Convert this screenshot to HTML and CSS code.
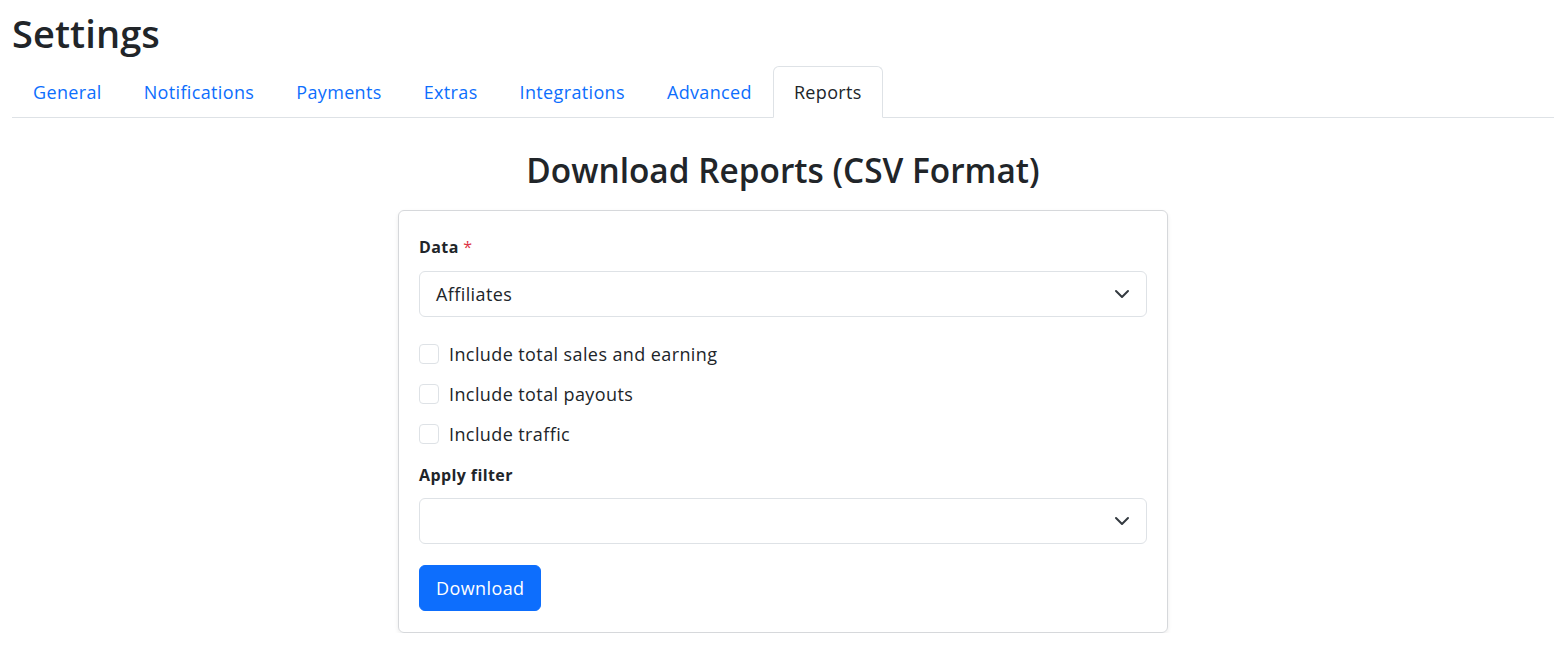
FILE: index.html
```html
<!DOCTYPE html>
<html lang="en">
<head>
<meta charset="utf-8">
<title>Settings</title>
<link rel="stylesheet" href="styles.css">
</head>
<body>
<div class="container">
  <h1 class="page-title">Settings</h1>
  <ul class="tabs">
    <li><a class="tab" href="#">General</a></li>
    <li><a class="tab" href="#">Notifications</a></li>
    <li><a class="tab" href="#">Payments</a></li>
    <li><a class="tab" href="#">Extras</a></li>
    <li><a class="tab" href="#">Integrations</a></li>
    <li><a class="tab" href="#">Advanced</a></li>
    <li><a class="tab active" href="#">Reports</a></li>
  </ul>
  <h2 class="section-title">Download Reports (CSV Format)</h2>
  <div class="card">
    <label class="field-label">Data <span class="req">*</span></label>
    <div class="select">
      <span class="select-value">Affiliates</span>
      <svg class="chevron" viewBox="0 0 16 16" width="16" height="16"><path d="M2 5l6 6 6-6" fill="none" stroke="#343a40" stroke-width="2" stroke-linecap="round" stroke-linejoin="round"/></svg>
    </div>
    <div class="checks">
      <label class="check"><span class="box"></span>Include total sales and earning</label>
      <label class="check"><span class="box"></span>Include total payouts</label>
      <label class="check"><span class="box"></span>Include traffic</label>
    </div>
    <label class="field-label filter-label">Apply filter</label>
    <div class="select">
      <span class="select-value"></span>
      <svg class="chevron" viewBox="0 0 16 16" width="16" height="16"><path d="M2 5l6 6 6-6" fill="none" stroke="#343a40" stroke-width="2" stroke-linecap="round" stroke-linejoin="round"/></svg>
    </div>
    <div class="actions">
      <button class="btn">Download</button>
    </div>
  </div>
</div>
</body>
</html>
```
FILE: styles.css
```css
* { box-sizing: border-box; }
html, body { margin: 0; padding: 0; background: #fff; }
body {
  font-family: "Open Sans", "Noto Sans", sans-serif;
  color: #212529;
  font-size: 18px;
  line-height: 1.5;
  letter-spacing: 0.4px;
}
.container { padding: 0 12px; }
.page-title {
  margin: 0;
  padding-top: 10px;
  font-size: 38px;
  line-height: 46px;
  font-weight: 600;
  letter-spacing: 0.1px;
}
.tabs {
  list-style: none;
  margin: 10px 0 0;
  padding: 0;
  display: flex;
  border-bottom: 1px solid #dee2e6;
}
.tabs li { margin-bottom: -1px; }
.tab {
  display: block;
  padding: 12px 20px 11px;
  line-height: 27px;
  letter-spacing: 0.35px;
  color: #0d6efd;
  text-decoration: none;
  border: 1px solid transparent;
  border-radius: 6px 6px 0 0;
}
.tab.active {
  color: #212529;
  border-color: #dee2e6 #dee2e6 #fff;
  background: #fff;
}
.section-title {
  margin: 30px 0 18px;
  text-align: center;
  font-size: 33.4px;
  line-height: 44px;
  font-weight: 600;
  letter-spacing: 0;
}
.card {
  width: 770px;
  margin: 0 auto;
  border: 1px solid #d6d8db;
  border-radius: 6px;
  padding: 24px 20px 21px;
  box-shadow: 0 2px 4px rgba(0,0,0,0.08);
}
.field-label {
  display: block;
  font-size: 16px;
  line-height: 24px;
  font-weight: 700;
  margin-bottom: 12px;
}
.req { color: #dc3545; font-weight: 400; }
.select {
  height: 46px;
  border: 1px solid #dee2e6;
  border-radius: 6px;
  display: flex;
  align-items: center;
  justify-content: space-between;
  padding: 0 16px;
}
.select-value { line-height: 27px; }
.chevron { display: block; }
.checks {
  margin-top: 17px;
  display: flex;
  flex-direction: column;
}
.check {
  height: 40px;
  display: flex;
  align-items: center;
  gap: 10px;
}
.box {
  width: 20px;
  height: 20px;
  border: 1px solid #dee2e6;
  border-radius: 4px;
  flex: none;
}
.filter-label { margin-top: 9px; margin-bottom: 11px; }
.actions { margin-top: 21px; }
.btn {
  font-family: inherit;
  font-size: 18px;
  letter-spacing: 0.4px;
  line-height: 27px;
  height: 46px;
  padding: 0 16px;
  color: #fff;
  background: #0d6efd;
  border: 1px solid #0d6efd;
  border-radius: 6px;
}
```
